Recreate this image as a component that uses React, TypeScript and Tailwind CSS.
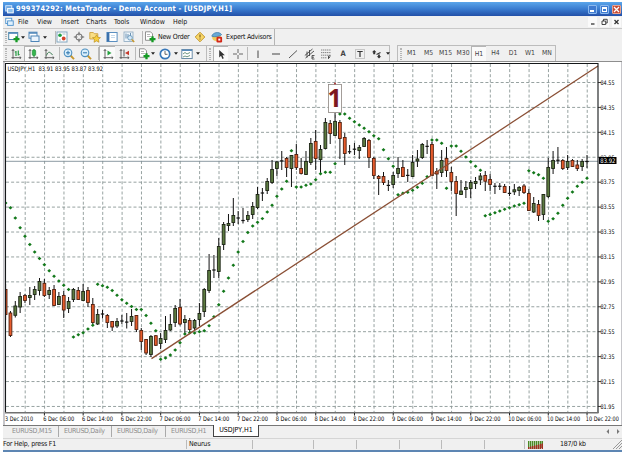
import React from 'react';

type Kind = 'g' | 'r';
type Candle = [high: number, top: number, bottom: number, low: number, kind: Kind];

const X0 = 5.6;
const STEP = 4.845;
const TOP = 62;

const xAt = (i: number) => X0 + i * STEP;

const candles: Candle[] = [
    [284, 289.5, 314.5, 320, 'r'], [311, 313, 335.5, 337, 'r'], [301, 306, 315.3, 317.5, 'g'], [292, 296.5, 307, 313, 'g'],
    [294, 295.5, 300.5, 303, 'r'], [287, 295.5, 297.5, 305, 'g'], [286, 289.5, 294.5, 300, 'g'], [278, 281.5, 290.5, 295.5, 'g'],
    [279, 283.3, 295.5, 297, 'r'], [287, 290.5, 294.5, 299, 'g'], [285, 289.5, 305.5, 306, 'r'], [292, 296.5, 304.5, 305, 'g'],
    [291, 295.5, 310, 318, 'r'], [297, 301.5, 308.5, 313, 'g'], [288, 289.5, 299.5, 302, 'g'], [287, 290.5, 299.5, 300, 'r'],
    [284, 291.5, 300.5, 301, 'g'], [287, 290.5, 302.5, 307, 'r'], [298, 304.5, 322.5, 324, 'r'], [309, 314.5, 324, 325, 'g'],
    [310, 313.5, 314.5, 318.5, 'g'], [314, 315.5, 322.5, 328, 'r'], [321, 321.5, 327, 331, 'r'], [318, 321.5, 326, 328, 'g'],
    [315, 320.5, 321.5, 324, 'g'], [313, 321.7, 322.5, 328.5, 'g'], [309, 316.5, 321.5, 326, 'g'], [315, 315.5, 329.5, 332, 'r'],
    [328, 330.5, 341.5, 350, 'r'], [339, 339.5, 353, 355, 'r'], [335, 336.5, 354.5, 357, 'g'], [335, 335.7, 345.3, 346, 'r'],
    [333, 338.5, 343.5, 349, 'g'], [316, 330.5, 339.5, 343, 'g'], [314, 324.5, 330, 331, 'g'], [305, 308.5, 322.5, 327, 'g'],
    [299, 307.5, 324, 325.5, 'r'], [315, 319.5, 322.5, 334, 'g'], [318, 320.5, 329.5, 334, 'r'], [319, 320.5, 328, 330, 'g'],
    [303, 313.5, 319.5, 326, 'g'], [288, 289.5, 311.5, 317, 'g'], [254, 270.5, 290.5, 293, 'g'], [255, 269.5, 270.5, 278, 'r'],
    [238, 246.5, 271.5, 278, 'g'], [222, 224.5, 244.5, 250, 'g'], [214, 223.5, 225.5, 231, 'g'], [198, 215.5, 222.5, 226, 'g'],
    [211, 217.5, 218.5, 224, 'g'], [208, 220, 221, 223.5, 'r'], [211, 215.5, 219.5, 222, 'g'], [202, 206.5, 214.5, 219, 'g'],
    [187, 194.5, 207.5, 209, 'g'], [188, 192.5, 193.5, 201, 'g'], [178, 181.5, 190.5, 194, 'g'], [160, 169.5, 182.5, 184, 'g'],
    [161, 162, 168.5, 176, 'g'], [151, 160.5, 161.3, 170, 'g'], [157, 158.5, 167.5, 177, 'r'], [155, 155.5, 168.5, 187, 'g'],
    [144, 154.5, 167.5, 170, 'r'], [158, 168.5, 173.5, 174.5, 'r'], [151, 161.5, 174.5, 175, 'g'], [138, 143.5, 162.5, 165, 'g'],
    [130, 141.5, 158.5, 170, 'r'], [145, 149.5, 159.5, 175, 'g'], [118, 122.5, 148.5, 149.5, 'g'], [120, 123.5, 133.5, 144, 'r'],
    [113, 121.5, 135.5, 136, 'g'], [120, 122.5, 138.5, 159, 'r'], [133, 137.5, 153.5, 165, 'r'], [145, 151, 152.5, 154, 'g'],
    [143, 148.7, 149.7, 155, 'g'], [145, 147.5, 150.5, 159, 'g'], [137, 138.5, 146.5, 147, 'g'], [139, 140.5, 157.5, 168, 'r'],
    [157, 158.5, 175.5, 179, 'r'], [175, 176.5, 178.5, 195, 'r'], [172, 176.5, 182.5, 185, 'r'], [180, 184.8, 186, 191, 'g'],
    [172, 175.5, 184.5, 188, 'g'], [157, 168.5, 173.5, 178, 'g'], [160, 167.5, 176.5, 177, 'r'], [169, 175, 175.8, 182, 'g'],
    [155, 162.5, 176.5, 177, 'g'], [150, 159, 161, 167, 'g'], [143, 144.5, 157.5, 159, 'g'], [140, 146, 146.7, 154, 'g'],
    [142, 144.5, 175.5, 176, 'r'], [168, 171.5, 174, 189, 'r'], [150, 160.5, 172.5, 177, 'g'], [147, 158.5, 170.5, 177, 'r'],
    [167, 172.5, 181.5, 191, 'r'], [176, 181.5, 193.5, 216, 'r'], [180, 191, 194.5, 195, 'g'], [181, 187.5, 189.5, 198, 'g'],
    [180, 182.5, 188.5, 198, 'g'], [177, 181.5, 183.5, 189, 'g'], [173, 176, 179.8, 185, 'g'], [171, 175.5, 181.2, 191, 'r'],
    [174, 179.5, 184.5, 191, 'r'], [183, 186, 186.6, 194, 'g'], [183, 185.5, 187, 190, 'r'], [184, 186.5, 192.5, 193, 'r'],
    [186, 193, 193.8, 196, 'g'], [184, 189.8, 191.8, 195, 'g'], [186, 187.5, 190.5, 196, 'g'], [184, 186, 192.5, 194, 'r'],
    [189, 193.5, 210.5, 211, 'r'], [197, 203.5, 212, 213, 'g'], [200, 204.5, 215.5, 221, 'r'], [194, 194.5, 214.5, 220, 'g'],
    [158, 167.5, 196.5, 198, 'g'], [151, 160.5, 168.5, 174, 'g'], [147, 159.5, 161, 164, 'g'], [159, 160.5, 168.5, 170, 'r'],
    [155, 161.5, 167.5, 170, 'g'], [159, 160.5, 166.5, 167, 'r'], [160, 165, 168.5, 171, 'r'], [159, 161.5, 166.5, 171, 'g'],
    [155, 161, 162, 168, 'g'],
];

// parabolic SAR, one value per bar
const sar = [
    203, 207.7, 218, 227.7, 236.3, 244.5, 252, 258.5, 264.7, 270.8, 276.3, 281, 285.3, 289.5, 337, 334.7, 332.7, 329, 325.3, 284.3,
    285.7, 287.3, 290.5, 295.3, 299.7, 303.3, 306.5, 309.5, 309.5, 315.5, 323.3, 330.7, 359.3, 358, 355, 350, 342.7, 334, 332.7, 333,
    331.7, 330.7, 325.7, 316.7, 304.7, 291.3, 278, 265.3, 252, 241.5, 232.5, 226, 222.3, 218.6, 212, 205.3, 196.3, 189, 181.3, 150.7,
    187, 187, 185.3, 184, 179.7, 173.7, 172.3, 172.3, 163.7, 114, 114, 118.3, 121.8, 125, 128.3, 131.7, 135.7, 138.7, 149.7, 158.7,
    166.3, 194.7, 193.3, 192.3, 190.3, 187.3, 183.3, 176.7, 140, 140, 143.3, 188.3, 146, 146, 151.3, 157, 161.7, 166.3, 170.3, 215.7,
    214.5, 212.7, 211, 209.3, 207.7, 206, 204.7, 203.3, 170.7, 172.7, 174.7, 178.3, 221.3, 218.7, 213.3, 205.3, 198.3, 192, 186.3, 182.3,
    178.3,
];

const prices = ['84.55', '84.35', '84.15', '83.95', '83.75', '83.55', '83.35', '83.15', '82.95', '82.75', '82.55', '82.35', '82.15', '81.95'];

const dates = [
    '6 Dec 06:00', '6 Dec 14:00', '6 Dec 22:00', '7 Dec 06:00', '7 Dec 14:00', '7 Dec 22:00', '8 Dec 06:00', '8 Dec 14:00',
    '8 Dec 22:00', '9 Dec 06:00', '9 Dec 14:00', '9 Dec 22:00', '10 Dec 06:00', '10 Dec 14:00', '10 Dec 22:00',
];

const priceY = (i: number) => 82.5 + i * 24.92;

const Chart: React.FC = () => (
    <svg className="block" width="616" height="363" viewBox={`5 ${TOP} 616 363`}>
        <rect x="5" y={TOP} width="616" height="363" fill="#fff" />
        <g stroke="#8b9796" strokeWidth="0.9" strokeDasharray="3 2.1" fill="none">
            {prices.map((p, i) => (
                <path key={p} d={`M6 ${priceY(i)}H598`} />
            ))}
            {Array.from({ length: 30 }, (_, i) => (
                <path key={i} d={`M${25.2 + i * 19.38} 64V412`} />
            ))}
        </g>
        <path d="M6 161.3H598" stroke="#7f8f99" strokeWidth="0.9" />
        <g>
            {candles.map(([high, top, bottom, low, kind], i) => (
                <g key={i}>
                    <path d={`M${xAt(i)} ${high}V${low}`} stroke="#111" strokeWidth="1" />
                    {bottom - top < 1.8 ? (
                        <path d={`M${xAt(i) - 1.7} ${(top + bottom) / 2}h3.4`} stroke="#111" strokeWidth="1.2" />
                    ) : (
                        <rect
                            x={xAt(i) - 1.4}
                            y={top}
                            width="2.8"
                            height={bottom - top}
                            fill={kind === 'g' ? '#5c7a40' : '#e85c2c'}
                            stroke={kind === 'g' ? '#1c2414' : '#51200f'}
                            strokeWidth="0.9"
                        />
                    )}
                </g>
            ))}
        </g>
        <g fill="#12781a">
            {sar.map((y, i) => (
                <path key={i} d={`M${xAt(i) - 1.9} ${y}l1.9 -1.7l1.9 1.7l-1.9 1.7z`} />
            ))}
        </g>
        <path d="M151.5 358.6L598 66" stroke="#8a4f35" strokeWidth="1.3" />
        <rect x="328.5" y="84.5" width="13" height="28" fill="#fff" stroke="#8d8580" strokeWidth="0.8" />
        <circle cx="335" cy="83.5" r="1" fill="#a33" />
        <text x="334.6" y="107" textAnchor="middle" fontSize="25" fontWeight="700" fill="#7d1820" fontFamily="'Open Sans', sans-serif">1</text>

        <path d="M5.5 413V63.5H598V413" fill="none" stroke="#15181a" strokeWidth="1.1" />
        <path d="M5 412.8H598.5" stroke="#707070" strokeWidth="1.4" />
        <g fontFamily="'DejaVu Sans Condensed', 'DejaVu Sans', sans-serif" fontSize="6.2" fill="#000">
            <rect x="6.5" y="64.5" width="97" height="7" fill="#fff" />
            <text x="7.5" y="70.5" textLength="95.5" lengthAdjust="spacingAndGlyphs">USDJPY,H1&#160;&#160;83.91 83.95 83.87 83.92</text>
            {prices.map((p, i) => (
                <g key={p}>
                    <path d={`M598 ${priceY(i)}h3`} stroke="#222" strokeWidth="0.9" />
                    <text x="600.5" y={priceY(i) + 2.3} textLength="14" lengthAdjust="spacingAndGlyphs">{p}</text>
                </g>
            ))}
            <rect x="599" y="157" width="17.5" height="7" fill="#000" />
            <text x="600.3" y="163" fill="#fff" textLength="15" lengthAdjust="spacingAndGlyphs">83.92</text>
            <text x="5" y="421" textLength="28" lengthAdjust="spacingAndGlyphs">3 Dec 2010</text>
            {dates.map((d, i) => (
                <g key={d}>
                    <path d={`M${44.4 + i * 38.76} 413v2.5`} stroke="#222" />
                    <text x={43.2 + i * 38.76} y="421" textLength={d.length > 11 ? 33 : 31} lengthAdjust="spacingAndGlyphs">{d}</text>
                </g>
            ))}
        </g>
    </svg>
);

const Icon: React.FC<{ children: React.ReactNode; className?: string }> = ({ children, className = 'w-3 h-3' }) => (
    <svg className={`block shrink-0 ${className}`} viewBox="0 0 12 12" fill="none">{children}</svg>
);

const Cell: React.FC<{ w: string; children?: React.ReactNode; pressed?: boolean }> = ({ w, children, pressed }) => (
    <div className={`flex shrink-0 h-full items-center justify-center ${w} ${pressed ? 'bg-[#fafafa] border-l border-t border-[#b5b5b5]' : ''}`}>{children}</div>
);

const Sep = () => <div className="w-px h-[13px] shrink-0 bg-[#b9b9b9]" />;
const Handle = () => <div className="w-[2px] h-[12px] shrink-0 border-l border-r border-dotted border-[#b5b5b5]" />;
const Caret = () => (
    <svg className="block shrink-0 w-1 h-[3px]" viewBox="0 0 4 3"><path d="M0 .3h4L2 2.8z" fill="#222" /></svg>
);

const Plus = () => <path d="M8.5 5.2v6M5.5 8.2h6" stroke="#159a24" strokeWidth="2.3" />;
const Axes = () => <path d="M3 1.5v9.5M1.5 9.7h9.5M1.8 3L3 1.5l1.2 1.5M9.7 8.5L11 9.7L9.7 11" stroke="#555" strokeWidth=".9" />;

const NewChartIcon = () => (
    <Icon><rect x=".7" y="1.5" width="9" height="7" fill="#fff" stroke="#4b87a8" /><path d="M.7 2.2h9" stroke="#5b8fc0" strokeWidth="1.4" /><Plus /></Icon>
);
const WindowsIcon = () => (
    <Icon><rect x="1" y="1.2" width="8" height="6" fill="#fff" stroke="#4e86b8" /><path d="M1 2h8" stroke="#4e86b8" strokeWidth="1.5" /><rect x="3" y="5" width="8" height="5.5" fill="#eaf4fd" stroke="#4e86b8" /></Icon>
);
const MarketIcon = () => (
    <Icon><rect x="1" y="1" width="10" height="10" fill="#fff" stroke="#82a6bf" /><circle cx="4" cy="4.2" r="1.8" fill="#1fa043" /><circle cx="7.7" cy="7.5" r="1.9" fill="#d5442a" /><path d="M6.5 3h3M3 9h2" stroke="#a7bdca" /></Icon>
);
const TargetIcon = () => (
    <Icon><circle cx="6" cy="6" r="3.2" stroke="#666" /><path d="M6 .8v3.6M6 7.6v3.6M.8 6h3.6M7.6 6h3.6" stroke="#666" /></Icon>
);
const NavigatorIcon = () => (
    <Icon><path d="M.8 3V1.5h3.5l1 1.2h3.5V8h-8z" fill="#f9df85" stroke="#c99b32" strokeWidth=".8" /><path d="M7.5 3.8l1.3 2.5 2.7.3-2 1.9.5 2.8-2.5-1.4L5 11.3l.5-2.8-2-1.9 2.7-.3z" fill="#f8cf3d" stroke="#b58a1e" strokeWidth=".6" /></Icon>
);
const TerminalIcon = () => (
    <Icon><rect x=".9" y="1.5" width="10.2" height="9" fill="#fff" stroke="#5b8fc0" /><path d="M2.2 1.5v9" stroke="#3a70ac" strokeWidth="2.4" /><path d="M5 4.5h4M5 6.5h4" stroke="#b7d1e8" strokeWidth=".8" /></Icon>
);
const TesterIcon = () => (
    <Icon><rect x="1" y="1" width="9" height="9.5" fill="#eef5fb" stroke="#8aa7be" strokeWidth=".8" /><path d="M3 2.5v5M5 3v4M7.5 2v3" stroke="#4b7aa2" strokeWidth=".8" /><circle cx="7" cy="6.8" r="2.3" fill="#d3e8f7" stroke="#5d8fb5" strokeWidth=".8" /><path d="M8.7 8.5l2.5 2.6" stroke="#c9982c" strokeWidth="1.5" /></Icon>
);
const OrderIcon = () => (
    <Icon><path d="M1.5 .8h5l2 2v6.5h-7z" fill="#fff" stroke="#777" strokeWidth=".8" /><path d="M3 3.5h3M3 5.5h4" stroke="#999" strokeWidth=".7" /><Plus /></Icon>
);
const MetaEditorIcon = () => (
    <Icon><path d="M6 1.2L10.8 6 6 10.8 1.2 6z" fill="#f8d768" stroke="#bd8e22" strokeWidth=".9" /><path d="M6 3.4v3.2M6 7.4v1.2" stroke="#74551b" strokeWidth="1.1" /></Icon>
);
const ExpertIcon = () => (
    <Icon><ellipse cx="5.5" cy="6.2" rx="4.3" ry="3.8" fill="#f2cb5c" /><path d="M.8 5.2C1.5 1.5 8 0 10.5 3.5c0 1.5-7 3-9.7 1.7z" fill="#68a9d6" stroke="#3979a7" strokeWidth=".7" /><rect x="5.5" y="5.8" width="5.6" height="5.6" rx="1.2" fill="#d32818" /><rect x="7.3" y="7.6" width="2" height="2" fill="#fff" /></Icon>
);
const Zoomer: React.FC<{ plus?: boolean }> = ({ plus }) => (
    <Icon><path d="M7.5 7.5l3.5 3.6" stroke="#c7962c" strokeWidth="1.9" /><circle cx="5" cy="4.8" r="3.8" fill="#d9eefb" stroke="#4c8fc0" strokeWidth="1.1" /><path d={plus ? 'M3 4.8h4M5 2.8v4' : 'M3 4.8h4'} stroke="#2d75ad" /></Icon>
);

const Toolbars: React.FC = () => (
    <div className="flex flex-col bg-[#f0f0f0] text-[7px] text-[#111]">
        <div className="flex h-[17px] border-t border-[#c9c9c9]">
            <div className="flex items-center h-[16px] w-[272px] border-r border-[#b5b5b5] pl-[2px]">
                <Handle />
                <Cell w="w-[14px]"><NewChartIcon /></Cell>
                <Cell w="w-[4px]"><Caret /></Cell>
                <Cell w="w-[18px]"><WindowsIcon /></Cell>
                <Cell w="w-[4px]"><Caret /></Cell>
                <Cell w="w-[8px]" />
                <Sep />
                <Cell w="w-[11px]"><MarketIcon /></Cell>
                <Cell w="w-[23px]"><TargetIcon /></Cell>
                <Cell w="w-[10px]"><NavigatorIcon /></Cell>
                <Cell w="w-[23px]"><TerminalIcon /></Cell>
                <Cell w="w-[11px]"><TesterIcon /></Cell>
                <Cell w="w-[8px]" />
                <Sep />
                <Cell w="w-[13px]"><OrderIcon /></Cell>
                <span className="ml-[2px] w-[35px] shrink-0 whitespace-nowrap tracking-[-0.25px]">New Order</span>
                <Cell w="w-[13px]"><MetaEditorIcon /></Cell>
                <Cell w="w-[21px]"><ExpertIcon /></Cell>
                <span className="ml-[-1px] whitespace-nowrap tracking-[-0.25px]">Expert Advisors</span>
            </div>
        </div>
        <div className="flex h-[17px] border-b border-[#8e8e8e]">
            <div className="flex items-center h-[16px] w-[204px] border-t border-r border-[#bcbcbc] pl-[2px]">
                <Handle />
                <Cell w="w-[17px]"><Icon><Axes /><path d="M6 3v5M4.7 4H6M8.3 2.5v5M8.3 6.5h1.3" stroke="#2a9b45" strokeWidth="1.2" /></Icon></Cell>
                <Cell w="w-[16px]" pressed><Icon><Axes /><path d="M7 1v8" stroke="#178631" /><rect x="5.3" y="2" width="3.4" height="5.5" rx="1" fill="#35b64e" stroke="#178631" strokeWidth=".6" /></Icon></Cell>
                <Cell w="w-[17px]"><Icon><Axes /><path d="M3.5 7.5C5 3 7 3.5 9.5 7" stroke="#3f7f55" /></Icon></Cell>
                <Cell w="w-[2px]" />
                <Sep />
                <Cell w="w-[18px]"><Zoomer plus /></Cell>
                <Cell w="w-[16px]"><Zoomer /></Cell>
                <Cell w="w-[4px]" />
                <Sep />
                <Cell w="w-[16px]" pressed><Icon><Axes /><path d="M5.5 2.5l4 2.5-4 2.5z" fill="#26a240" /></Icon></Cell>
                <Cell w="w-[17px]"><Icon><Axes /><path d="M6 1.5v7" stroke="#555" /><path d="M11 2.7L7 5l4 2.3z" fill="#c6392b" /></Icon></Cell>
                <Cell w="w-[3px]" />
                <Sep />
                <Cell w="w-[15px]"><OrderIcon /></Cell>
                <Caret />
                <Cell w="w-[19px]"><Icon><circle cx="6" cy="6" r="4.7" fill="#fff" stroke="#3777b9" strokeWidth="1.7" /><path d="M6 3v3.3h2.5" stroke="#555" strokeWidth=".9" /></Icon></Cell>
                <Cell w="w-[4px]"><Caret /></Cell>
                <Cell w="w-[18px]"><Icon><rect x=".8" y="1.5" width="10.4" height="9" fill="#fff" stroke="#6d8ea8" /><path d="M1 2.3h10" stroke="#588bbb" strokeWidth="1.4" /><path d="M2 6l2-1.5 2 1.5 3-1.5M2 9l2-1 2 .8 3-1.3" stroke="#4a7c62" strokeWidth=".8" /></Icon></Cell>
                <Caret />
            </div>
            <div className="flex items-center h-[16px] w-[183px] border-t border-r border-[#bcbcbc] pl-[2px]">
                <Handle />
                <Cell w="w-[2px]" />
                <Cell w="w-[15px]" pressed><Icon className="w-[11px] h-[11px]"><path d="M3.5 1v8.2l2-1.8 1.5 3.4 1.5-.7L7 6.8h2.7z" fill="#333" /></Icon></Cell>
                <Cell w="w-[19px]"><Icon><path d="M6 1v4M6 7v4M1 6h4M7 6h4" stroke="#555" strokeWidth=".9" /></Icon></Cell>
                <Sep />
                <Cell w="w-[20px]"><Icon><path d="M6 2.5v7.5" stroke="#444" /></Icon></Cell>
                <Cell w="w-[16px]"><Icon><path d="M2 6h8" stroke="#444" /></Icon></Cell>
                <Cell w="w-[17px]"><Icon><path d="M2 10L10 2.5" stroke="#444" strokeWidth=".9" /></Icon></Cell>
                <Cell w="w-[17px]"><Icon><path d="M.8 7.5L8.5 1M1.5 10L10 3M3 3.5v6M5.5 2v6" stroke="#444" strokeWidth=".9" /><path d="M10.5 7.5H8v3.5h2.5M8 9.2h2" stroke="#333" strokeWidth=".8" /></Icon></Cell>
                <Cell w="w-[16px]"><Icon><path d="M1 2h10M1 4.6h10M1 7.2h10M1 9.8h6" stroke="#777" strokeWidth=".9" strokeDasharray="1.3 .6" /><path d="M8.5 11V8h2.2M8.5 9.5H10" stroke="#333" strokeWidth=".8" /></Icon></Cell>
                <Cell w="w-[18px]"><span className="text-[7.5px] font-bold text-[#444]">A</span></Cell>
                <Cell w="w-[16px]"><Icon><rect x="1.5" y="1.5" width="9" height="9" stroke="#888" strokeWidth=".8" strokeDasharray="1 1" /><path d="M3.3 3.5h5.4M6 3.5v5.5" stroke="#333" strokeWidth="1.2" /></Icon></Cell>
                <Cell w="w-[18px]"><Icon><path d="M3.2 2l2.2 2.2-1.2.1v1.9H2.2V4.3L1 4.2zM8 10.5L5.8 8.2h1.3V6.5h1.8v1.7h1.3z" fill="#333" /><path d="M5.5 6.5l4-2" stroke="#333" strokeWidth="1.2" /></Icon></Cell>
                <Caret />
            </div>
            <div className="w-[7px]" />
            <div className="flex items-center h-[16px] w-[159px] border-t border-l border-r border-[#bcbcbc] pl-[2px] text-[#444] text-[6.8px]">
                <Handle />
                <Cell w="w-[19px]">M1</Cell>
                <Cell w="w-[15px]">M5</Cell>
                <Cell w="w-[19px]">M15</Cell>
                <Cell w="w-[16px]">M30</Cell>
                <Cell w="w-[15px]" pressed>H1</Cell>
                <Cell w="w-[19px]">H4</Cell>
                <Cell w="w-[16px]">D1</Cell>
                <Cell w="w-[18px]">W1</Cell>
                <Cell w="w-[16px]">MN</Cell>
            </div>
        </div>
    </div>
);

const TitleBar: React.FC = () => (
    <div className="flex items-center h-[14px] pl-[2px] pr-px bg-linear-to-b from-[#5aa5ea] via-[#3a7cd0] to-[#2350a8] text-white">
        <Icon className="w-[9px] h-[9px]"><rect x="1" y="1" width="8" height="7" fill="#5f9fdf" stroke="#dcecff" strokeWidth="1.3" /><rect x="3.5" y="4.5" width="7.5" height="6" fill="#8fc1ee" stroke="#fff" strokeWidth="1.3" /></Icon>
        <span className="ml-[2px] flex-1 whitespace-nowrap font-bold text-[7.4px] tracking-[0.25px]">999374292: MetaTrader - Demo Account - [USDJPY,H1]</span>
        <div className="flex gap-[3px]">
            <div className="w-[9px] h-[9px] rounded-[1px] border border-[#8ab8ee] bg-[#3f7bd0] flex items-end p-px"><div className="w-1 h-[2px] bg-white" /></div>
            <div className="w-[9px] h-[9px] rounded-[1px] border border-[#8ab8ee] bg-[#3f7bd0] p-px"><div className="w-full h-full border border-t-2 border-white" /></div>
            <div className="w-[9px] h-[9px] rounded-[1px] border border-[#eaa18c] bg-[#c64b35]">
                <svg className="block w-full h-full" viewBox="0 0 7 7"><path d="M1 1l5 5M6 1L1 6" stroke="#fff" strokeWidth="1.3" /></svg>
            </div>
        </div>
    </div>
);

const MenuBar: React.FC = () => (
    <div className="flex items-center h-[12px] pl-[2px] pr-px bg-[#f0f0f0] text-[7px] text-[#111]">
        <Icon className="w-[9px] h-[10px]"><rect x="1" y="1" width="8" height="7" fill="#fff" stroke="#4c91cc" strokeWidth="1.2" /><rect x="3.5" y="4.5" width="7.5" height="6" fill="#dff0fd" stroke="#4c91cc" strokeWidth="1.2" /></Icon>
        <span className="w-[19px] ml-[4px]">File</span>
        <span className="w-[24px]">View</span>
        <span className="w-[25px]">Insert</span>
        <span className="w-[28px]">Charts</span>
        <span className="w-[26px]">Tools</span>
        <span className="w-[33px]">Window</span>
        <span className="flex-1">Help</span>
        <svg className="block w-[33px] h-[10px]" viewBox="0 0 33 10" fill="none" stroke="#333">
            <path d="M0 0h9v10H0zM12 0h9v10h-9zM24 0h9v10h-9z" fill="#fafafa" stroke="none" />
            <path d="M3 7h3.5" strokeWidth="1.3" />
            <path d="M14 4h3.7v3.5H14zM15.5 4V2.3h3.7V6h-1.3" strokeWidth=".9" />
            <path d="M26.5 3l4 4M30.5 3l-4 4" strokeWidth="1.3" />
        </svg>
    </div>
);

const ChartTabs: React.FC = () => (
    <div className="flex h-[13px] bg-[#f0f0f0] border-t border-[#777] text-[7px] text-[#8c8c8c]">
        <div className="flex items-center w-[55px] pl-[9px] h-[11px] tracking-[-0.2px]">EURUSD,M15</div>
        <div className="flex items-center w-[53px] pl-[5px] h-[11px] border-l border-[#aaa] tracking-[-0.3px]">EURUSD,Daily</div>
        <div className="flex items-center w-[54px] pl-[5px] h-[11px] border-l border-[#aaa] tracking-[-0.3px]">EURUSD,Daily</div>
        <div className="flex items-center w-[48px] pl-[5px] h-[11px] border-l border-[#aaa] tracking-[-0.2px]">EURUSD,H1</div>
        <div className="flex items-center justify-center -mt-px w-[46px] h-[12px] bg-white text-black border-b border-l border-r border-[#444]">USDJPY,H1</div>
        <div className="flex-1" />
        <svg className="block w-[16px] h-[11px] mr-[1px]" viewBox="0 0 16 11"><path d="M4 3v5L1.5 5.5zM12 3v5l2.5-2.5z" fill="#777" /></svg>
    </div>
);

const StatusBar: React.FC = () => (
    <div className="flex items-center h-[12px] bg-[#f0f0f0] border-t border-[#d5d5d5] text-[7px] text-[#111]">
        <div className="w-[183px] tracking-[-0.2px]">For Help, press F1</div>
        <div className="flex items-center w-[66px] h-[9px] pl-[2px] border-l border-[#bbb] tracking-[-0.2px]">Neurus</div>
        <div className="w-[61px] h-[9px] border-l border-[#bbb]" />
        <div className="w-[43px] h-[9px] border-l border-[#bbb]" />
        <div className="w-[43px] h-[9px] border-l border-[#bbb]" />
        <div className="w-[42px] h-[9px] border-l border-[#bbb]" />
        <div className="w-[43px] h-[9px] border-l border-[#bbb]" />
        <div className="w-[40px] h-[9px] border-l border-[#bbb]" />
        <div className="flex items-center flex-1 h-[9px] pl-[3px] border-l border-[#bbb]">
            <svg className="block w-[15px] h-[8px]" viewBox="0 0 15 8">
                <path d="M.7 0v8M2.7 0v8M4.7 0v8M6.7 0v8M8.7 0v8M10.7 0v8M12.7 0v8M14.5 0v8" stroke="#4b8b25" strokeWidth="1.4" />
                <path d="M.7 6v2M2.7 5.5V8M4.7 5v3M6.7 4.5V8M8.7 4v4M10.7 3.5V8M12.7 3v5M14.5 2.5V8" stroke="#a52c21" strokeWidth="1.4" />
            </svg>
            <span className="ml-[17px] flex-1 tracking-[-0.25px]">187/0 kb</span>
            <svg className="block w-[9px] h-[9px]" viewBox="0 0 9 9"><path d="M0 9l9-9M3 9l6-6M6 9l3-3" stroke="#999" /></svg>
        </div>
    </div>
);

export default function App() {
    return (
        <div className="w-[625px] h-[452px] overflow-hidden bg-white pt-[2px] pl-[3px] pr-[3px] leading-none font-['DejaVu_Sans_Condensed','DejaVu_Sans',sans-serif]">
            <TitleBar />
            <MenuBar />
            <Toolbars />
            <div className="bg-[#c6c6ca] pl-[2px] pr-px">
                <Chart />
            </div>
            <ChartTabs />
            <StatusBar />
            <div className="h-[4px] bg-[#5d86b3]" />
        </div>
    );
}
